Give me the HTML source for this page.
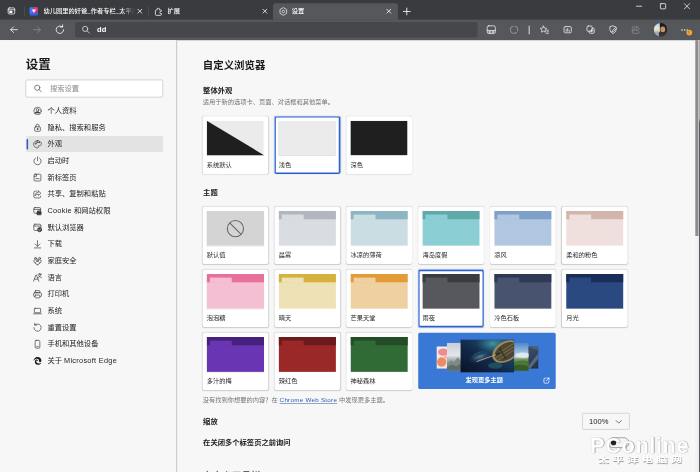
<!DOCTYPE html>
<html lang="zh-CN">
<head>
<meta charset="utf-8">
<title>设置</title>
<style>
html,body{margin:0;padding:0;background:#f7f7f7;}
body{width:700px;height:472px;overflow:hidden;position:relative;font-family:"Liberation Sans","Noto Sans CJK SC",sans-serif;}
#page{position:absolute;left:0;top:0;width:1344px;height:907px;transform:scale(0.5208333);transform-origin:0 0;background:#f7f7f7;overflow:hidden;color:#1b1b1b;}
#page *{box-sizing:border-box;}
.abs{position:absolute;}
svg{display:block;overflow:visible;}
/* ---------- browser chrome ---------- */
#tabstrip{position:absolute;left:0;top:0;width:1344px;height:38px;background:#3a3b3e;}
#toolbar{position:absolute;left:0;top:38px;width:1344px;height:39px;background:#56575b;}
.tab{position:absolute;top:6px;height:32px;width:240px;color:#fff;font-size:12px;line-height:32px;}
.tab.active{background:#56575b;border-radius:5px 5px 0 0;}
.tab .ttl{position:absolute;left:38.5px;top:-1px;font-weight:500;white-space:nowrap;overflow:hidden;width:176px;}
.tab .ttl.fade{-webkit-mask-image:linear-gradient(90deg,#000 85%,transparent 100%);mask-image:linear-gradient(90deg,#000 85%,transparent 100%);}
.tab .cls{position:absolute;left:216.5px;top:9px;width:13px;height:13px;}
.tab .fav{position:absolute;left:11px;top:7px;width:18px;height:18px;}
.tsep{position:absolute;top:12px;width:1.2px;height:20px;background:#5c5d61;}
#omni{position:absolute;left:144px;top:4px;width:772.5px;height:30px;border-radius:4px;background:#46474b;}
/* ---------- sidebar ---------- */
#side{position:absolute;left:0;top:77px;width:340px;height:830px;background:#f7f7f7;border-right:1px solid #9a9a9a;}
#side h1{position:absolute;left:49.5px;top:32px;margin:0;font-size:24px;font-weight:700;line-height:32px;color:#1a1a1a;}
#search{position:absolute;left:49px;top:76px;width:264px;height:34px;border:1px solid #b2b2b2;border-radius:3px;background:#fff;}
#search span{position:absolute;left:46px;top:0;line-height:31px;font-size:14px;color:#8a8a8a;}
.nav{position:absolute;left:50px;width:263px;height:31px;font-size:14px;line-height:31.5px;color:#222;border-radius:3px;}
.nav.sel{background:#e3e3e3;}
.nav.sel:before{content:"";position:absolute;left:1px;top:5.5px;width:3px;height:20px;border-radius:2px;background:#2a5fc9;}
.nav span{position:absolute;left:41px;top:0;white-space:nowrap;}
.nav svg{position:absolute;left:11.5px;top:6px;width:20px;height:20px;}
/* ---------- main ---------- */
#main{position:absolute;left:340px;top:77px;width:995px;height:830px;}
#main h2{position:absolute;left:49.5px;top:34px;margin:0;font-size:20px;font-weight:700;line-height:28px;color:#1a1a1a;}
.h3{position:absolute;left:50px;font-size:14px;font-weight:700;line-height:20px;color:#1a1a1a;white-space:nowrap;}
.desc{position:absolute;left:49.5px;font-size:12px;line-height:16px;color:#767676;white-space:nowrap;}
.card{position:absolute;width:126px;height:109.5px;background:#fff;border-radius:4px;box-shadow:0 0 2.5px rgba(0,0,0,.12),0 1px 2.5px rgba(0,0,0,.07);}
.card.big{height:111px;}
.card.sel{box-shadow:inset 0 0 0 2.6px #2b5fd0,0 0 2px rgba(43,95,208,.6);}
.card .pv{position:absolute;left:8px;top:8px;width:110px;height:67px;overflow:hidden;box-shadow:0 .6px 1px rgba(0,0,0,.22);}
.card.big .pv{top:9px;height:66px;width:108.5px;}
.card.big .lb{top:85.5px;}
.card .pv i{position:absolute;left:0;top:0;width:110px;height:16px;display:block;}
.card .pv b{position:absolute;left:5.5px;top:6.8px;width:42.5px;height:10px;display:block;}
.card .lb{position:absolute;left:8px;top:85px;font-size:12px;line-height:16px;color:#2a2a2a;white-space:nowrap;}
.disc{position:absolute;width:264px;height:108px;background:#3a78d6;border-radius:3px;overflow:hidden;}
.disc .dl{position:absolute;left:-5px;top:82px;width:264px;text-align:center;font-size:12px;line-height:16px;color:#fff;font-weight:700;}
.dd{position:absolute;left:778px;top:716px;width:91px;height:32px;border:1px solid #b9b9b9;border-radius:2px;background:#f7f7f7;}
.dd span{position:absolute;left:12px;top:0;line-height:31px;font-size:14.5px;color:#1b1b1b;}
.tog{position:absolute;left:827px;top:762.5px;width:41px;height:20px;border:1px solid #555;border-radius:10px;}
.tog div{position:absolute;left:5px;top:4px;width:10px;height:10px;border-radius:5px;background:#222;}
#sb{position:absolute;left:1334.8px;top:77px;width:9.2px;height:830px;background:#f1f1f1;}
#sbt{position:absolute;left:0;top:0;width:6.4px;height:376px;background:#8c8c8c;}
#sbl{position:absolute;left:7.3px;top:0;width:1.9px;height:830px;background:linear-gradient(180deg,#aaa 0,#aaa 150px,#5a5a62 160px,#5a5a62 100%);}
#wm{position:absolute;left:1133px;top:826px;width:211px;height:81px;color:#fff;}
#wm .w1{position:absolute;left:0;top:6px;font-size:42px;font-weight:700;line-height:46px;letter-spacing:1px;white-space:nowrap;text-shadow:1.2px 1.5px 2px rgba(0,0,0,.42),0 0 2px rgba(0,0,0,.15);}
#wm .w2{position:absolute;left:15px;top:48.5px;font-size:13px;font-weight:900;line-height:18px;letter-spacing:3.9px;white-space:nowrap;transform:scaleX(1.66);transform-origin:0 0;text-shadow:.6px .9px 1.2px rgba(0,0,0,.38);}
em{font-style:normal;letter-spacing:.6px;}
</style>
</head>
<body>
<div id="page">
<div class="abs" style="left:0;top:0;width:1344px;height:77px;background:#56575b"></div>
<div id="tabstrip">
<svg class="abs" style="left:12.5px;top:12px" width="18" height="18" viewBox="0 0 20 20" fill="none" stroke="#fff" stroke-width="1.6" stroke-linecap="round" stroke-linejoin="round"><rect x="3" y="3.5" width="14" height="13" rx="2.5"/><path d="M3 7.5h14"/><rect x="5.500" y="9.500" width="6.500" height="5" rx="0.800" fill="#fff" stroke="none"/></svg>
<div class="tsep" style="left:47px"></div>
<div class="tab" style="left:45px">
<svg class="fav" viewBox="0 0 18 18"><rect x="1" y="1" width="16" height="16" rx="2.5" fill="#2f62e8"/><path d="M1 3.5a2.5 2.5 0 0 1 2.500-2.500h4.500l1 8-8 5z" fill="#3d7bf2"/><path d="M9 1h5.500a2.500 2.500 0 0 1 2.500 2.500v3l-7 7.500-3-5z" fill="#f5336e"/><path d="M5 5l4 7 4-7z" fill="#fff" opacity=".95"/></svg>
<div class="ttl fade">幼儿园里的奸爸_作者专栏_太平洋电脑网</div>
<svg class="cls" viewBox="0 0 14 14" stroke="#fff" stroke-width="1.6" stroke-linecap="round"><path d="M3 3l8 8M11 3l-8 8"/></svg>
</div>
<div class="tsep" style="left:284.5px"></div>
<div class="tab" style="left:285px">
<svg class="fav" viewBox="0 0 18 18" fill="none" stroke="#ececec" stroke-width="1.600" stroke-linejoin="round"><path d="M4.800 5.500h1.400a2.400 2.400 0 1 1 4.600 0h1.700a2 2 0 0 1 2 2v.600a2.400 2.400 0 1 0 0 4.600v1.300a2 2 0 0 1-2 2h-7.700a2 2 0 0 1-2-2v-6.500a2 2 0 0 1 2-2z" transform="translate(-0.500,0.500)"/></svg>
<div class="ttl" style="left:36.5px">扩展</div>
<svg class="cls" viewBox="0 0 14 14" stroke="#fff" stroke-width="1.6" stroke-linecap="round"><path d="M3 3l8 8M11 3l-8 8"/></svg>
</div>
<div class="tab active" style="left:523.5px">
<svg class="fav" viewBox="0 0 18 18" fill="none" stroke="#e8e8e8" stroke-width="1.5" stroke-linejoin="round"><path d="M9 1.600l6.400 3.700v7.400l-6.400 3.700-6.400-3.700v-7.400z"/><circle cx="9" cy="9" r="2.400"/></svg>
<div class="ttl" style="left:36.5px">设置</div>
<svg class="cls" viewBox="0 0 14 14" stroke="#fff" stroke-width="1.6" stroke-linecap="round"><path d="M3 3l8 8M11 3l-8 8"/></svg>
</div>
<svg class="abs" style="left:771px;top:11.5px" width="20" height="20" viewBox="0 0 20 20" fill="none" stroke="#fff" stroke-width="1.6" stroke-linecap="round" stroke-linejoin="round"><path d="M10 3.500v13M3.500 10h13"/></svg>
<svg class="abs" style="left:1217px;top:2px" width="20" height="20" viewBox="0 0 20 20" fill="none" stroke="#fff" stroke-width="1.4" stroke-linecap="round" stroke-linejoin="round"><path d="M5 10h10"/></svg>
<svg class="abs" style="left:1263px;top:2px" width="20" height="20" viewBox="0 0 20 20" fill="none" stroke="#fff" stroke-width="1.4" stroke-linecap="round" stroke-linejoin="round"><rect x="5" y="5" width="10" height="10" rx="1.2"/></svg>
<svg class="abs" style="left:1309px;top:2px" width="20" height="20" viewBox="0 0 20 20" fill="none" stroke="#fff" stroke-width="1.4" stroke-linecap="round" stroke-linejoin="round"><path d="M5 5l10 10M15 5l-10 10"/></svg>
</div>
<div id="toolbar">
<svg class="abs" style="left:17px;top:9px" width="20" height="20" viewBox="0 0 20 20" fill="none" stroke="#fff" stroke-width="1.5" stroke-linecap="round" stroke-linejoin="round"><path d="M16.500 10h-13M9 4.500l-5.500 5.500 5.500 5.500"/></svg>
<svg class="abs" style="left:61px;top:9px" width="20" height="20" viewBox="0 0 20 20" fill="none" stroke="#8b8c90" stroke-width="1.5" stroke-linecap="round" stroke-linejoin="round"><path d="M3.500 10h13M11 4.500l5.500 5.500-5.500 5.500"/></svg>
<svg class="abs" style="left:104px;top:8px" width="22" height="22" viewBox="0 0 20 20" fill="none" stroke="#fff" stroke-width="1.4" stroke-linecap="round" stroke-linejoin="round"><path d="M16.500 10a6.500 6.500 0 1 1-2.300-4.950"/><path d="M14.800 1.600v3.800h-3.800"/></svg>
<div id="omni">
<svg class="abs" style="left:11px;top:5px" width="20" height="20" viewBox="0 0 20 20" fill="none" stroke="#e0e0e0" stroke-width="1.5" stroke-linecap="round" stroke-linejoin="round"><circle cx="8.500" cy="8.500" r="5"/><path d="M12.300 12.300l4.200 4.200"/></svg>
<div class="abs" style="left:42px;top:0;line-height:29px;font-size:14.5px;color:#fff;font-weight:700;letter-spacing:.3px">dd</div>
</div>
<svg class="abs" style="left:933px;top:9px" width="20" height="20" viewBox="0 0 20 20" fill="none" stroke="#f0f0f0" stroke-width="1.5" stroke-linecap="round" stroke-linejoin="round"><rect x="2.500" y="2.500" width="15.500" height="15" rx="3"/><path d="M2.500 11.500h15.500"/><circle cx="6.800" cy="14.500" r="1.500"/><circle cx="13.200" cy="14.500" r="1.500"/></svg>
<svg class="abs" style="left:977px;top:9px" width="20" height="20" viewBox="0 0 20 20" fill="none" stroke="#8e8f93" stroke-width="2.1" stroke-linecap="round" stroke-linejoin="round"><path d="M8 3.300a7 7 0 0 0 2 13.700 7 7 0 0 0 4.500-1.600"/><path d="M12.300 3.400a7 7 0 0 1 4.300 8.900" /></svg>
<div class="abs" style="left:1015px;top:11px;width:2px;height:17px;background:#d8d8d8;border-radius:1px"></div>
<svg class="abs" style="left:1035px;top:9px" width="20" height="20" viewBox="0 0 20 20" fill="none" stroke="#f0f0f0" stroke-width="1.4" stroke-linecap="round" stroke-linejoin="round"><path d="M8.500 3l1.900 3.900 4.300.600-3.100 3 .700 4.300-3.800-2-3.800 2 .700-4.300-3.100-3 4.300-.600z"/><path d="M14.500 11h3.500M15.500 14h2.500M13.500 17h4.500" /></svg>
<svg class="abs" style="left:1080px;top:9px" width="20" height="20" viewBox="0 0 20 20" fill="none" stroke="#f0f0f0" stroke-width="1.5" stroke-linecap="round" stroke-linejoin="round"><rect x="3" y="4" width="14" height="12" rx="2.500"/><path d="M7 13v-3M10 13v-5.500M13 13v-2"/></svg>
<svg class="abs" style="left:1124px;top:9px" width="20" height="20" viewBox="0 0 20 20" fill="none" stroke="#f0f0f0" stroke-width="1.5" stroke-linecap="round" stroke-linejoin="round"><rect x="3" y="3" width="10" height="10" rx="2.500"/><path d="M7 13v1.500a2.500 2.500 0 0 0 2.500 2.500h5a2.500 2.500 0 0 0 2.500-2.500v-5a2.500 2.500 0 0 0-2.500-2.500h-1.500"/><path d="M12 9.500v5M9.500 12h5"/></svg>
<svg class="abs" style="left:1167px;top:9px" width="20" height="20" viewBox="0 0 20 20" fill="none" stroke="#f0f0f0" stroke-width="1.5" stroke-linecap="round" stroke-linejoin="round"><path d="M10 2.800l6 2.200v4.500c0 3.600-2.400 6.300-6 7.700-3.600-1.400-6-4.100-6-7.700v-4.500z"/><path d="M9 11.500l5.500-5.500 2 2-5.500 5.500-2.600.600z" fill="#56575b"/></svg>
<svg class="abs" style="left:1211px;top:9px" width="20" height="20" viewBox="0 0 20 20" fill="none" stroke="#8b8c90" stroke-width="1.5" stroke-linecap="round" stroke-linejoin="round"><path d="M11.500 3.500l5 4.500-5 4.500v-2.700c-3 0-4.800 1-6 3 0-4 2.200-6.600 6-6.800z"/><path d="M8 4h-2.500a2.500 2.500 0 0 0-2.500 2.500v8a2.500 2.500 0 0 0 2.500 2.500h8a2.500 2.500 0 0 0 2.500-2.500v-1"/></svg>
<div class="abs" style="left:1255px;top:6px;width:26px;height:26px;border-radius:13px;overflow:hidden;background:#2b2522"><div class="abs" style="left:0;top:0;width:12px;height:26px;background:linear-gradient(180deg,#a9c8ee 0%,#dfe9f5 35%,#e9d9a0 55%,#7fa6d8 75%,#c9b08a 100%)"></div><div class="abs" style="left:12px;top:0;width:14px;height:9px;background:#1d1a18"></div><div class="abs" style="left:13px;top:7px;width:9px;height:11px;background:#c4926c;border-radius:4px"></div><div class="abs" style="left:10px;top:18px;width:16px;height:8px;background:#3a3430"></div></div>
<div class="abs" style="left:1308px;top:18px;width:2.6px;height:2.6px;border-radius:2px;background:#eee;box-shadow:5px 0 0 #eee,10px 0 0 #eee"></div>
<div class="abs" style="left:1317.500px;top:19px;width:11px;height:11px;border-radius:6px;background:#f2a33a;color:#8a5200;font-size:8px;line-height:11px;text-align:center;font-weight:700">!</div>
</div>
<div id="side"><h1>设置</h1>
<div id="search"><svg class="abs" style="left:13px;top:6px" width="20" height="20" viewBox="0 0 20 20" fill="none" stroke="#555" stroke-width="1.4" stroke-linecap="round" stroke-linejoin="round"><circle cx="8.500" cy="8.500" r="5"/><path d="M12.300 12.300l4.200 4.200"/></svg><span>搜索设置</span></div>
<div class="nav" style="top:120px">
<svg viewBox="0 0 20 20" fill="none" stroke="#3a3a3a" stroke-width="1.3" stroke-linecap="round" stroke-linejoin="round"><circle cx="10" cy="10" r="7"/><circle cx="10" cy="8" r="2.500"/><path d="M5 14.600c1-2.200 2.800-3 5-3s4 .8 5 3" fill="#3a3a3a"/></svg>
<span>个人资料</span></div>
<div class="nav" style="top:152px">
<svg viewBox="0 0 20 20" fill="none" stroke="#3a3a3a" stroke-width="1.3" stroke-linecap="round" stroke-linejoin="round"><rect x="4.500" y="8.500" width="11" height="8.500" rx="1.500"/><path d="M7 8.500v-2a3 3 0 0 1 6 0v2"/><circle cx="10" cy="12.700" r="1" fill="#3a3a3a"/></svg>
<span>隐私、搜索和服务</span></div>
<div class="nav sel" style="top:184px">
<svg viewBox="0 0 20 20" fill="none" stroke="#3a3a3a" stroke-width="1.3" stroke-linecap="round" stroke-linejoin="round"><path d="M10 3c4.200 0 7.500 2.800 7.500 6.200 0 2.300-1.800 3.600-3.700 3.600h-1.500c-.9 0-1.400.9-.9 1.700.8 1.200.1 2.500-1.400 2.500-4.100 0-7.500-3-7.500-7s3.300-7 7.500-7z"/><circle cx="6.500" cy="9" r="1"/><circle cx="9" cy="6" r="1"/><circle cx="13" cy="6.500" r="1"/></svg>
<span>外观</span></div>
<div class="nav" style="top:216px">
<svg viewBox="0 0 20 20" fill="none" stroke="#3a3a3a" stroke-width="1.3" stroke-linecap="round" stroke-linejoin="round"><path d="M10 2v7.500"/><path d="M6.300 4.300a7 7 0 1 0 7.400 0"/></svg>
<span>启动时</span></div>
<div class="nav" style="top:248px">
<svg viewBox="0 0 20 20" fill="none" stroke="#3a3a3a" stroke-width="1.3" stroke-linecap="round" stroke-linejoin="round"><rect x="3.500" y="3.500" width="13" height="13" rx="2"/><path d="M3.500 7.500h4.500v-4M7 12h6"/></svg>
<span>新标签页</span></div>
<div class="nav" style="top:280px">
<svg viewBox="0 0 20 20" fill="none" stroke="#3a3a3a" stroke-width="1.3" stroke-linecap="round" stroke-linejoin="round"><path d="M11.500 3.500l5 4.500-5 4.500v-2.700c-3 0-4.800 1-6 3 0-4 2.200-6.600 6-6.800z"/><path d="M8 4h-2.500a2.500 2.500 0 0 0-2.500 2.500v8a2.500 2.500 0 0 0 2.500 2.500h8a2.500 2.500 0 0 0 2.500-2.500v-1"/></svg>
<span>共享、复制和粘贴</span></div>
<div class="nav" style="top:312px">
<svg viewBox="0 0 20 20" fill="none" stroke="#3a3a3a" stroke-width="1.3" stroke-linecap="round" stroke-linejoin="round"><rect x="3" y="3.500" width="13" height="11" rx="2"/><path d="M3 7h13"/><rect x="9" y="11" width="8" height="6.500" rx="1.200" fill="#3a3a3a"/><path d="M11 11v-1.200a2 2 0 0 1 4 0v1.200"/></svg>
<span><em>Cookie</em> 和网站权限</span></div>
<div class="nav" style="top:344px">
<svg viewBox="0 0 20 20" fill="none" stroke="#3a3a3a" stroke-width="1.3" stroke-linecap="round" stroke-linejoin="round"><rect x="3" y="3.500" width="13.500" height="12" rx="2"/><path d="M3 7h13.500"/><circle cx="14" cy="14" r="4" fill="#3a3a3a"/><path d="M12.200 14l1.300 1.300 2.400-2.500" stroke="#f7f7f7" stroke-width="1.300"/></svg>
<span>默认浏览器</span></div>
<div class="nav" style="top:376px">
<svg viewBox="0 0 20 20" fill="none" stroke="#3a3a3a" stroke-width="1.3" stroke-linecap="round" stroke-linejoin="round"><path d="M10 3v10.500M5.500 9.500l4.500 4.500 4.500-4.500M4 17h12"/></svg>
<span>下载</span></div>
<div class="nav" style="top:408px">
<svg viewBox="0 0 20 20" fill="none" stroke="#3a3a3a" stroke-width="1.3" stroke-linecap="round" stroke-linejoin="round"><circle cx="6" cy="5" r="1.800"/><circle cx="14" cy="5" r="1.800"/><circle cx="10" cy="8.500" r="1.800"/><path d="M10 17.500c-4-2.200-7-4.500-7-7.500 0-1.500 1.200-2.500 2.600-2.300M10 17.500c4-2.200 7-4.500 7-7.500 0-1.500-1.200-2.500-2.600-2.300M6.500 13c.5-1.500 2-2.200 3.500-2.200s3 .7 3.500 2.200"/></svg>
<span>家庭安全</span></div>
<div class="nav" style="top:440px">
<svg viewBox="0 0 20 20" fill="none" stroke="#3a3a3a" stroke-width="1.3" stroke-linecap="round" stroke-linejoin="round"><path d="M2.500 17l4.500-12h1l4.500 12M4.300 13h6.400"/><path d="M11 3.500h6.500M14 2v1.500M16.500 3.500c-.5 3-2.500 5.500-5 6.500M12.500 6c.8 1.800 2.500 3.300 5 4"/></svg>
<span>语言</span></div>
<div class="nav" style="top:472px">
<svg viewBox="0 0 20 20" fill="none" stroke="#3a3a3a" stroke-width="1.3" stroke-linecap="round" stroke-linejoin="round"><rect x="5.500" y="3" width="9" height="4" rx="1"/><rect x="2.500" y="7" width="15" height="7.500" rx="2"/><rect x="5.500" y="11.500" width="9" height="5.500" rx="1" fill="#f7f7f7"/></svg>
<span>打印机</span></div>
<div class="nav" style="top:504px">
<svg viewBox="0 0 20 20" fill="none" stroke="#3a3a3a" stroke-width="1.3" stroke-linecap="round" stroke-linejoin="round"><rect x="4" y="5" width="12" height="8.500" rx="1.200"/><path d="M2.500 15.500h15"/></svg>
<span>系统</span></div>
<div class="nav" style="top:536px">
<svg viewBox="0 0 20 20" fill="none" stroke="#3a3a3a" stroke-width="1.3" stroke-linecap="round" stroke-linejoin="round"><path d="M3 10a7 7 0 1 0 2.300-5.200"/><path d="M4.600 1.500v3.800h3.800"/></svg>
<span>重置设置</span></div>
<div class="nav" style="top:568px">
<svg viewBox="0 0 20 20" fill="none" stroke="#3a3a3a" stroke-width="1.3" stroke-linecap="round" stroke-linejoin="round"><rect x="5.500" y="2.500" width="9" height="15" rx="2"/><path d="M8.500 14.500h3"/></svg>
<span>手机和其他设备</span></div>
<div class="nav" style="top:600px">
<svg viewBox="0 0 20 20"><path d="M17.500 13.500c-1.200 2.700-3.900 4.300-6.900 4-3.900-.4-6.300-3.500-5.600-7 .4-2 2.200-3.300 4.200-3 1.300.2 2.300 1.100 2.500 2.300h-4.200c-.2 2.500 1.600 4.700 4.400 4.900 2.100.2 4.100-.4 5.600-1.200z" fill="#1b1b1b"/><path d="M2.500 10c0-4.300 3.500-7.600 7.700-7.500 4.200.1 7.400 3.300 7.300 7 0 1.800-1.500 3-3.200 2.900-1.200-.1-1.800-.9-1.500-1.800.8-2.300-.8-4.900-3.800-5-3.300-.1-5.600 2.300-6.500 4.400z" fill="#1b1b1b"/></svg>
<span>关于 <em>Microsoft Edge</em></span></div>
</div>
<div id="main"><h2>自定义浏览器</h2>
<div class="h3" style="top:86.5px">整体外观</div>
<div class="desc" style="top:110px">适用于新的选项卡、页面、对话框和其他菜单。</div>
<div class="card big" style="left:49.0px;top:145.5px"><div class="pv"><div class="abs" style="left:0;top:0;width:110px;height:66px;background:#ebebeb"></div><svg class="abs" style="left:0;top:0" width="110" height="66" viewBox="0 0 110 66"><path d="M0 0L110 66H0z" fill="#1f1f1f"/></svg></div><div class="lb">系统默认</div></div>
<div class="card big sel" style="left:187.0px;top:145.5px"><div class="pv"><div class="abs" style="left:0;top:0;width:110px;height:66px;background:#ebebeb"></div></div><div class="lb">浅色</div></div>
<div class="card big" style="left:325.0px;top:145.5px"><div class="pv"><div class="abs" style="left:0;top:0;width:110px;height:66px;background:#1f1f1f"></div></div><div class="lb">深色</div></div>
<div class="h3" style="top:282px">主题</div>
<div class="card" style="left:49.0px;top:320.0px"><div class="pv"><div class="abs" style="left:0;top:0;width:110px;height:67px;background:#d4d4d4"></div><svg class="abs" style="left:38px;top:17px" width="34" height="34" viewBox="0 0 34 34" fill="none" stroke="#686868" stroke-width="2.100"><circle cx="17" cy="17" r="15.500"/><path d="M6 6l22 22"/></svg></div><div class="lb">默认值</div></div>
<div class="card" style="left:187.0px;top:320.0px"><div class="pv"><div class="abs" style="left:0;top:0;width:110px;height:67px;background:#d9dce1"></div><i style="background:#b2b7bf"></i><b style="background:#d9dce1"></b></div><div class="lb">晨雾</div></div>
<div class="card" style="left:325.0px;top:320.0px"><div class="pv"><div class="abs" style="left:0;top:0;width:110px;height:67px;background:#c9dde3"></div><i style="background:#8eb5c2"></i><b style="background:#c9dde3"></b></div><div class="lb">冰凉的薄荷</div></div>
<div class="card" style="left:463.0px;top:320.0px"><div class="pv"><div class="abs" style="left:0;top:0;width:110px;height:67px;background:#8bcfd4"></div><i style="background:#62a9aa"></i><b style="background:#8bcfd4"></b></div><div class="lb">海岛度假</div></div>
<div class="card" style="left:601.0px;top:320.0px"><div class="pv"><div class="abs" style="left:0;top:0;width:110px;height:67px;background:#b1c6e0"></div><i style="background:#7fa0c8"></i><b style="background:#b1c6e0"></b></div><div class="lb">凉风</div></div>
<div class="card" style="left:739.0px;top:320.0px"><div class="pv"><div class="abs" style="left:0;top:0;width:110px;height:67px;background:#efe0dd"></div><i style="background:#d2b5ad"></i><b style="background:#efe0dd"></b></div><div class="lb">柔和的粉色</div></div>
<div class="card" style="left:49.0px;top:441.1px"><div class="pv"><div class="abs" style="left:0;top:0;width:110px;height:67px;background:#f4bed3"></div><i style="background:#e8719c"></i><b style="background:#f4bed3"></b></div><div class="lb">泡泡糖</div></div>
<div class="card" style="left:187.0px;top:441.1px"><div class="pv"><div class="abs" style="left:0;top:0;width:110px;height:67px;background:#ede1b5"></div><i style="background:#d5b13d"></i><b style="background:#ede1b5"></b></div><div class="lb">晴天</div></div>
<div class="card" style="left:325.0px;top:441.1px"><div class="pv"><div class="abs" style="left:0;top:0;width:110px;height:67px;background:#efd0a0"></div><i style="background:#e39b38"></i><b style="background:#efd0a0"></b></div><div class="lb">芒果天堂</div></div>
<div class="card sel" style="left:463.0px;top:441.1px"><div class="pv"><div class="abs" style="left:0;top:0;width:110px;height:67px;background:#57585d"></div><i style="background:#3b3c41"></i><b style="background:#57585d"></b></div><div class="lb">雨夜</div></div>
<div class="card" style="left:601.0px;top:441.1px"><div class="pv"><div class="abs" style="left:0;top:0;width:110px;height:67px;background:#48546f"></div><i style="background:#2e3953"></i><b style="background:#48546f"></b></div><div class="lb">冷色石板</div></div>
<div class="card" style="left:739.0px;top:441.1px"><div class="pv"><div class="abs" style="left:0;top:0;width:110px;height:67px;background:#2a4980"></div><i style="background:#1a2d59"></i><b style="background:#2a4980"></b></div><div class="lb">月光</div></div>
<div class="card" style="left:49.0px;top:562.2px"><div class="pv"><div class="abs" style="left:0;top:0;width:110px;height:67px;background:#6a35b2"></div><i style="background:#45207c"></i><b style="background:#6a35b2"></b></div><div class="lb">多汁的梅</div></div>
<div class="card" style="left:187.0px;top:562.2px"><div class="pv"><div class="abs" style="left:0;top:0;width:110px;height:67px;background:#9b2828"></div><i style="background:#6b1b1b"></i><b style="background:#9b2828"></b></div><div class="lb">辣红色</div></div>
<div class="card" style="left:325.0px;top:562.2px"><div class="pv"><div class="abs" style="left:0;top:0;width:110px;height:67px;background:#306b36"></div><i style="background:#224d26"></i><b style="background:#306b36"></b></div><div class="lb">神秘森林</div></div>
<div class="disc" style="left:463.0px;top:562.2px">
<svg class="abs" style="left:1.3px;top:1.3px" width="264" height="108" viewBox="0 0 264 108">
<defs>
<linearGradient id="g1" x1="0" y1="0" x2="1" y2="1"><stop offset="0" stop-color="#f4ecec"/><stop offset="1" stop-color="#f1ddd8"/></linearGradient>
<linearGradient id="g2" x1="0" y1="0" x2="0" y2="1"><stop offset="0" stop-color="#c9ced4"/><stop offset=".45" stop-color="#e4e6e8"/><stop offset=".62" stop-color="#a3abae"/><stop offset="1" stop-color="#6f7b78"/></linearGradient>
<linearGradient id="g4" x1="0" y1="0" x2="0" y2="1"><stop offset="0" stop-color="#4f86c4"/><stop offset=".35" stop-color="#9fc0e2"/><stop offset=".5" stop-color="#c4d6e6"/><stop offset=".6" stop-color="#6f9560"/><stop offset="1" stop-color="#3f6a30"/></linearGradient>
<linearGradient id="g5" x1="0" y1="0" x2="1" y2="1"><stop offset="0" stop-color="#1f2c44"/><stop offset=".5" stop-color="#3a4a64"/><stop offset="1" stop-color="#222f47"/></linearGradient>
<linearGradient id="g3" x1="0" y1="1" x2="1" y2="0"><stop offset="0" stop-color="#0a1226"/><stop offset=".45" stop-color="#12294a"/><stop offset=".8" stop-color="#1d4d6a"/><stop offset="1" stop-color="#225a74"/></linearGradient>
<radialGradient id="gl" cx=".5" cy=".5" r=".5"><stop offset="0" stop-color="#4aa3b0" stop-opacity=".85"/><stop offset="1" stop-color="#2a6f85" stop-opacity="0"/></radialGradient>
<radialGradient id="gs" cx=".5" cy=".5" r=".5"><stop offset="0" stop-color="#5a86a8" stop-opacity=".8"/><stop offset="1" stop-color="#2a4f78" stop-opacity="0"/></radialGradient>
<clipPath id="cc"><rect x="80" y="12" width="103" height="63"/></clipPath>
<clipPath id="c1"><rect x="34" y="25" width="72" height="43"/></clipPath>
<clipPath id="c2"><rect x="54" y="18" width="90" height="54"/></clipPath>
<clipPath id="c4"><rect x="121" y="18" width="90" height="54"/></clipPath>
<clipPath id="c5"><rect x="158" y="25" width="72" height="43"/></clipPath>
</defs>
<g clip-path="url(#c1)"><rect x="34" y="25" width="72" height="43" fill="url(#g1)"/><ellipse cx="47" cy="36" rx="10" ry="7" fill="#f08c90"/><ellipse cx="44" cy="55" rx="9" ry="9" fill="#ec8a66"/><ellipse cx="53" cy="46" rx="5" ry="4" fill="#f6b8a8"/></g>
<g clip-path="url(#c5)"><rect x="158" y="25" width="72" height="43" fill="url(#g5)"/><path d="M206 68L230 38v10L214 68z" fill="#6b7b92" opacity=".7"/><path d="M205 25h25v8z" fill="#55657e" opacity=".7"/></g>
<g clip-path="url(#c2)"><rect x="54" y="18" width="90" height="54" fill="url(#g2)"/><path d="M54 58l8-6 6 3 7-9 6 8v18H54z" fill="#7d8a8a"/><path d="M54 64l10-4 8 3 9-5v14H54z" fill="#5f6e66"/></g>
<g clip-path="url(#c4)"><rect x="121" y="18" width="90" height="54" fill="url(#g4)"/><ellipse cx="200" cy="42" rx="14" ry="5" fill="#e6eef5" opacity=".85"/><path d="M183 56c8-4 18-5 28-2v18h-28z" fill="#4a7636"/><path d="M183 62c9-3 19-2 28 2v8h-28z" fill="#355c28"/></g>
<g clip-path="url(#cc)"><rect x="80" y="12" width="103" height="63" fill="url(#g3)"/>
<ellipse cx="142" cy="20" rx="34" ry="20" fill="url(#gl)"/>
<ellipse cx="118" cy="45" rx="24" ry="11" fill="url(#gs)" transform="rotate(-18 118 45)"/>
<path d="M104 44c4-5 10-8 18-9M106 49c5-4 11-6 19-7" stroke="#9fb8cc" stroke-width="1" fill="none" stroke-dasharray="1.500 1.500" opacity=".8"/>
<ellipse cx="147" cy="62" rx="14" ry="6" fill="#2f7d86" opacity=".45"/>
<g transform="rotate(-32 167 35)"><ellipse cx="167" cy="35" rx="28" ry="19" fill="#9c8a5c"/><ellipse cx="168" cy="35.500" rx="24.500" ry="15.500" fill="#4d4535"/><path d="M146 30h44M145 35.500h46M146 41h44" stroke="#75673f" stroke-width="2.200"/><path d="M160 24v23" stroke="#2c281f" stroke-width="2"/></g>
<path d="M112 54l36-13" stroke="#b8a168" stroke-width="1.800" stroke-linecap="round"/>
<path d="M148 41l8-4" stroke="#222" stroke-width="2.500"/>
</g>
<rect x="80" y="12" width="103" height="63" fill="none" stroke="rgba(0,0,0,.25)" stroke-width=".8"/>
</svg>
<div class="dl">发现更多主题</div>
<svg class="abs" style="left:239px;top:85px" width="14" height="14" viewBox="0 0 12 12" fill="none" stroke="#fff" stroke-width="1.200" stroke-linecap="round" stroke-linejoin="round"><path d="M5 2h-1.500a1.500 1.500 0 0 0-1.500 1.500v5a1.500 1.500 0 0 0 1.500 1.500h5a1.500 1.500 0 0 0 1.500-1.500v-1.500M7 1.500h3.500v3.500M10.300 1.700l-4.300 4.300"/></svg>
</div>
<div class="desc" style="top:683px;color:#767676">没有找到你想要的内容？在 <span style="color:#2a5db0;text-decoration:underline;text-underline-offset:2px;letter-spacing:.5px">Chrome Web Store</span> 中发现更多主题。</div>
<div class="h3" style="top:723px">缩放</div>
<div class="dd"><span>100%</span><svg class="abs" style="left:62px;top:10px" width="14" height="12" viewBox="0 0 14 12" fill="none" stroke="#444" stroke-width="1.400" stroke-linecap="round" stroke-linejoin="round"><path d="M2 3.500l5 5 5-5"/></svg></div>
<div class="h3" style="top:762.2px">在关闭多个标签页之前询问</div>
<div class="tog"><div></div></div>
<div class="abs" style="top:824px;left:49.5px;color:#666;font-size:18.5px;line-height:24px;font-weight:700;white-space:nowrap">自定义工具栏</div>
</div>
<div id="sb"><div id="sbt"></div><div id="sbl"></div></div>
<div id="wm"><div class="w1">PConline</div><div class="w2">太平洋电脑网</div></div>
</div>
</body>
</html>
